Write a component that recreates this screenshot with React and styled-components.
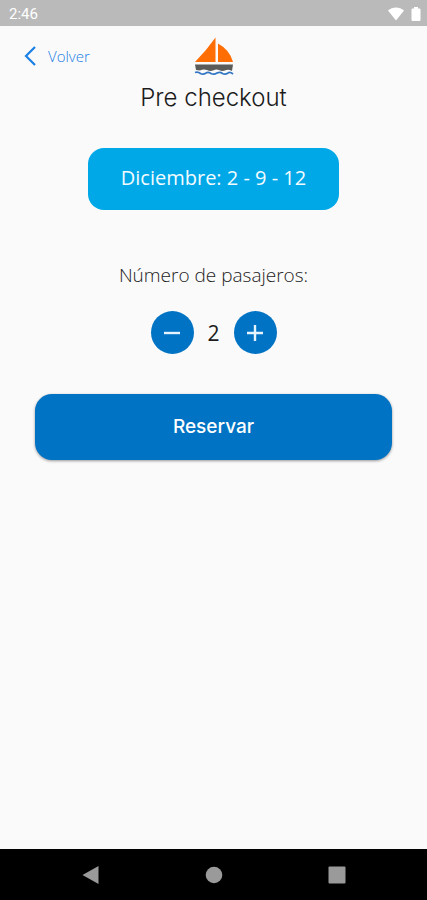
import React, { useState } from "react";
import styled, { createGlobalStyle } from "styled-components";

const GlobalStyle = createGlobalStyle`
  *, *::before, *::after { box-sizing: border-box; }
  body {
    margin: 0;
    background: #fafafa;
    color: #1c1c1c;
    font-family: "Open Sans", "Noto Sans", sans-serif;
  }
  button { font: inherit; border: 0; padding: 0; cursor: pointer; }
`;

const Screen = styled.div`
  display: flex;
  flex-direction: column;
  min-height: 100vh;
`;

const StatusBar = styled.div`
  display: flex;
  align-items: center;
  justify-content: space-between;
  height: 26px;
  padding: 2px 6px 0 9px;
  background: #bababa;
  color: #fff;
  font: 400 15px/24px Roboto, sans-serif;
`;

const StatusIcons = styled.div`
  display: flex;
  align-items: center;
  gap: 6px;
`;

const Header = styled.header`
  display: grid;
  grid-template-columns: 1fr auto 1fr;
  align-items: center;
  padding: 11px 24px 0;
`;

const BackLink = styled.a`
  display: flex;
  align-items: center;
  justify-self: start;
  gap: 12px;
  padding-bottom: 2px;
  color: #1a80e6;
  font-size: 15px;
  line-height: 20px;
  font-weight: 300;
  text-decoration: none;
`;

const Main = styled.main`
  display: flex;
  flex: 1;
  flex-direction: column;
  align-items: center;
  padding: 6px 35px 0;
`;

const Title = styled.h1`
  margin: 0;
  font: 300 24px/32px Inter, sans-serif;
`;

const DateCard = styled.div`
  margin-top: 34px;
  padding: 15px 33px 17px;
  border-radius: 16px;
  background: #00a8e8;
  color: #f2fbff;
  font-size: 20px;
  line-height: 30px;
  font-weight: 400;
  white-space: nowrap;
`;

const PassengerLabel = styled.h2`
  margin: 49px 0 0;
  font-size: 19px;
  line-height: 32px;
  font-weight: 300;
`;

const Stepper = styled.div`
  display: flex;
  align-items: center;
  justify-content: center;
  margin-top: 20px;
`;

const StepButton = styled.button`
  display: grid;
  place-items: center;
  width: 43px;
  height: 43px;
  border-radius: 50%;
  background: #0073c4;
  color: #e6f4ff;
`;

const Count = styled.output`
  width: 40px;
  font-size: 21px;
  line-height: 32px;
  text-align: center;
`;

const PrimaryButton = styled.button`
  align-self: stretch;
  height: 66px;
  margin-top: 40px;
  border-radius: 17px;
  background: #0073c4;
  box-shadow: 0 1px 3px rgba(0, 0, 0, 0.4);
  color: #fff;
  && { font: 500 19px/24px Inter, sans-serif; }
`;

const NavBar = styled.nav`
  display: flex;
  align-items: center;
  justify-content: center;
  gap: 75px;
  height: 51px;
  background: #000;
`;

const NavButton = styled.button`
  display: grid;
  place-items: center;
  width: 48px;
  height: 48px;
  background: transparent;
  color: #9a9a9a;
`;

function WifiIcon() {
  return (
    <svg width="18" height="14" viewBox="0 0 18 14" aria-hidden="true">
      <path d="M1 3.5C5.5-.4 12.500-.4 17 3.500L9 13.500Z" fill="#fff" />
    </svg>
  );
}

function BatteryIcon() {
  return (
    <svg width="10" height="14" viewBox="0 0 10 14" aria-hidden="true">
      <path d="M3 0h4v1.500h1.500Q9.500 1.500 9.500 2.500v10.500q0 1-1 1h-7q-1 0-1-1V2.500q0-1 1-1H3Z" fill="#fff" />
    </svg>
  );
}

function BoatLogo() {
  return (
    <svg width="40" height="39" viewBox="0 0 40 39" role="img" aria-label="Velero">
      <path d="M21.500 0.500V25H1Q12 14 21.500 0.500Z" fill="#ff6d05" />
      <path d="M24 6.500Q36 13 39 25H24Z" fill="#ff6d05" />
      <path d="M1 27.500H39L38 34Q34 32 31 33.500Q28 34.500 25 33Q22 32 19 33.500Q16 34.500 13 33Q9 32 6 33.500L2 33Z" fill="#5b5b59" />
      <path
        d="M1 35.500Q4 34.500 6.500 36.500Q9 38 12 36Q14 34.500 17 36.500Q20 38 23 36Q26 34.500 28.500 36.500Q31 38 34 36Q36 34.500 39 37"
        fill="none"
        stroke="#3277c4"
        strokeWidth="1.800"
      />
    </svg>
  );
}

export default function App() {
  const [count, setCount] = useState(2);
  return (
    <>
      <GlobalStyle />
      <Screen>
        <StatusBar>
          <span>2:46</span>
          <StatusIcons>
            <WifiIcon />
            <BatteryIcon />
          </StatusIcons>
        </StatusBar>
        <Header>
          <BackLink href="#volver">
            <svg width="12" height="20" viewBox="0 0 12 20" aria-hidden="true">
              <path d="M11 1L2 10L11 19" fill="none" stroke="currentColor" strokeWidth="2.200" />
            </svg>
            Volver
          </BackLink>
          <BoatLogo />
        </Header>
        <Main>
          <Title>Pre checkout</Title>
          <DateCard>Diciembre: 2 - 9 - 12</DateCard>
          <PassengerLabel id="passengers">Número de pasajeros:</PassengerLabel>
          <Stepper role="group" aria-labelledby="passengers">
            <StepButton type="button" aria-label="Quitar pasajero" onClick={() => setCount(Math.max(1, count - 1))}>
              <svg width="18" height="18" viewBox="0 0 18 18" aria-hidden="true">
                <path d="M1 9H17" stroke="currentColor" strokeWidth="2.400" />
              </svg>
            </StepButton>
            <Count aria-labelledby="passengers">{count}</Count>
            <StepButton type="button" aria-label="Añadir pasajero" onClick={() => setCount(count + 1)}>
              <svg width="18" height="18" viewBox="0 0 18 18" aria-hidden="true">
                <path d="M1 9H17M9 1V17" stroke="currentColor" strokeWidth="2.400" />
              </svg>
            </StepButton>
          </Stepper>
          <PrimaryButton type="button">Reservar</PrimaryButton>
        </Main>
        <NavBar aria-label="Sistema">
          <NavButton type="button" aria-label="Atrás">
            <svg width="18" height="18" viewBox="0 0 18 18" aria-hidden="true">
              <path d="M16.500 0V18L0.500 9Z" fill="currentColor" />
            </svg>
          </NavButton>
          <NavButton type="button" aria-label="Inicio">
            <svg width="18" height="18" viewBox="0 0 18 18" aria-hidden="true">
              <circle cx="9" cy="9" r="8.300" fill="currentColor" />
            </svg>
          </NavButton>
          <NavButton type="button" aria-label="Recientes">
            <svg width="18" height="18" viewBox="0 0 18 18" aria-hidden="true">
              <rect x="0.500" y="0.500" width="17" height="17" rx="1" fill="currentColor" />
            </svg>
          </NavButton>
        </NavBar>
      </Screen>
    </>
  );
}
